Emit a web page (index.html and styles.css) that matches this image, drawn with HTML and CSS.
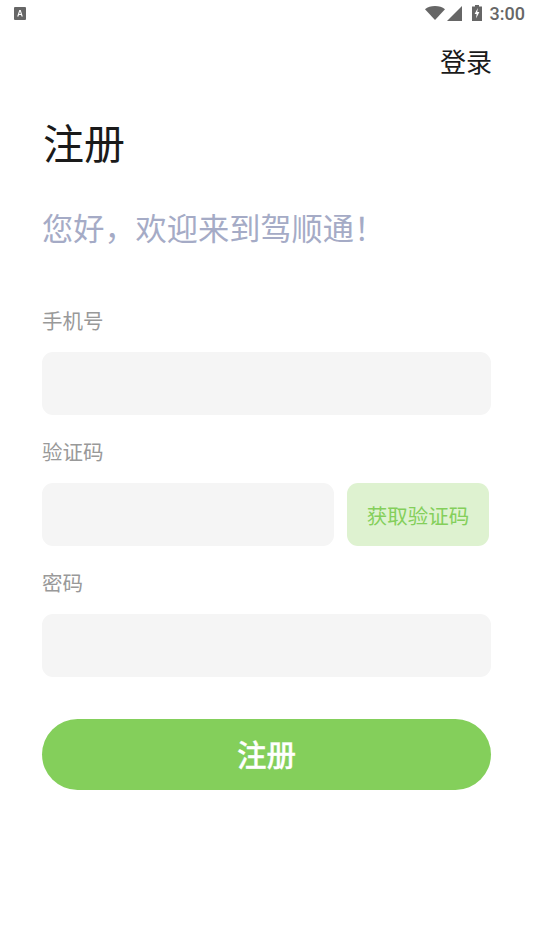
FILE: index.html
```html
<!DOCTYPE html>
<html lang="zh-CN">
<head>
    <meta charset="UTF-8">
    <meta name="viewport" content="width=device-width, initial-scale=1.0">
    <title>注册</title>
    <link rel="stylesheet" href="styles.css">
</head>
<body>
    <div class="status-bar">
        <div class="status-notice">
            <svg width="12" height="13" viewBox="0 0 12 13">
                <rect width="12" height="13" rx="1" fill="#666"/>
                <path d="M3.2 9.5 5.3 3h1.4l2.1 6.5H7.5L7.1 8H4.9l-.4 1.5zM5.2 6.9h1.6L6 4.3z" fill="#fff"/>
            </svg>
        </div>
        <div class="status-icons">
            <svg width="20" height="14" viewBox="0 0 20 14">
                <path d="M0 3.2C2.6 1 6 0 10 0s7.4 1 10 3.2L10 14z" fill="#666"/>
            </svg>
            <svg class="signal" width="15" height="15" viewBox="0 0 15 15">
                <path d="M15 0v15H0z" fill="#666"/>
            </svg>
            <svg class="battery" width="10" height="16" viewBox="0 0 10 16">
                <path d="M3 0h4v1.5h3V16H0V1.5h3z" fill="#666"/>
                <path d="M5.8 3 2.6 9h2l-.5 4.5L7.4 7H5.3z" fill="#fff"/>
            </svg>
            <span class="status-time">3:00</span>
        </div>
    </div>

    <div class="top-link"><a href="#">登录</a></div>

    <div class="container">
        <h1 class="title">注册</h1>
        <p class="welcome">您好，欢迎来到驾顺通！</p>

        <div class="field-label first">手机号</div>
        <input class="text-input" type="tel">

        <div class="field-label">验证码</div>
        <div class="code-row">
            <input class="text-input code-input" type="text">
            <button class="code-button">获取验证码</button>
        </div>

        <div class="field-label">密码</div>
        <input class="text-input" type="password">

        <button class="submit-button">注册</button>
    </div>
</body>
</html>
```

FILE: styles.css
```css
* {
    box-sizing: border-box;
}

body {
    font-family: "Noto Sans CJK SC", "Roboto", sans-serif;
    margin: 0;
    padding: 0;
    width: 534px;
    height: 950px;
    background-color: #fff;
    overflow: hidden;
}

.status-bar {
    display: flex;
    justify-content: space-between;
    align-items: center;
    height: 28px;
    padding: 0 9px 2px 14px;
}

.status-notice {
    display: flex;
}

.status-icons {
    display: flex;
    align-items: center;
}

.signal {
    margin-left: 2px;
}

.battery {
    margin-left: 10px;
}

.status-time {
    font-family: "Roboto", sans-serif;
    font-size: 18px;
    font-weight: 500;
    color: #666;
    margin-left: 8px;
}

.top-link {
    display: flex;
    justify-content: flex-end;
    padding-right: 42px;
    height: 36px;
    align-items: center;
    margin-top: 14px;
}

.top-link a {
    font-size: 26px;
    color: #1a1a1a;
    text-decoration: none;
}

.container {
    padding: 0 43px 0 42px;
}

.title {
    font-size: 41px;
    font-weight: 400;
    color: #1a1a1a;
    line-height: 58px;
    margin: 34px 0 0;
    padding-left: 1px;
}

.welcome {
    font-size: 31.2px;
    color: #a5abc6;
    line-height: 46px;
    margin: 34px 0 0;
}

.field-label {
    font-size: 20.5px;
    color: #999;
    line-height: 32px;
    margin: 20px 0 16px;
}

.field-label.first {
    margin-top: 54px;
}

.text-input {
    display: block;
    width: 100%;
    height: 63px;
    border: none;
    border-radius: 11px;
    background-color: #f5f5f5;
}

.code-row {
    display: flex;
    gap: 13px;
    padding-right: 2px;
}

.code-input {
    width: 292px;
}

.code-button {
    font-family: inherit;
    width: 142px;
    height: 63px;
    border: none;
    border-radius: 11px;
    background-color: #def2d0;
    color: #84cf5b;
    font-size: 20.5px;
    padding: 0;
}

.submit-button {
    display: block;
    font-family: inherit;
    width: 100%;
    height: 71px;
    margin-top: 42px;
    padding: 0 0 3px;
    border: none;
    border-radius: 36px;
    background-color: #84cf5b;
    color: #fff;
    font-size: 29.5px;
    font-weight: 500;
    -webkit-text-stroke: 0.3px #fff;
}
```
